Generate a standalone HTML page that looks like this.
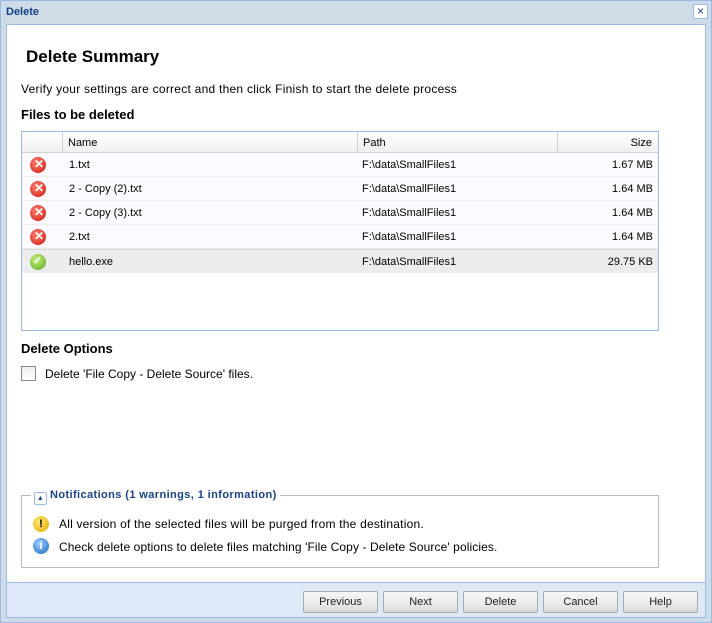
<!DOCTYPE html>
<html><head><style>
*{box-sizing:border-box;margin:0;padding:0}
body{width:712px;height:623px;background:#cad8e8;font-family:"Liberation Sans",sans-serif;font-size:12px;color:#000;position:relative;overflow:hidden}
.abs{position:absolute}
.title{left:0;top:0;width:712px;height:24px;background:#cfdbe6;border:1px solid #99bbe8;border-bottom:none}
.title span{position:absolute;left:5px;top:5px;font-weight:bold;color:#15428b;font-size:11px}
.close{right:4px;top:4px;width:15px;height:15px;border:1px solid #99bbe8;background:#fff;color:#15428b;font-size:12px;line-height:13px;text-align:center}
.frame{left:0;top:24px;width:712px;height:599px;background:#cfdbe6;border:1px solid #99bbe8;border-top:none}
.main{left:6px;top:24px;width:700px;height:559px;background:#fff;border:1px solid #99bbe8}
.foot{left:6px;top:583px;width:700px;height:35px;background:#dfe8f6;border:1px solid #99bbe8;border-top:none}
.grid{left:21px;top:131px;width:638px;height:200px;border:1px solid #99bbe8;background:#fff}
.hdr{position:absolute;left:0;top:0;width:636px;height:21px;background:linear-gradient(#fff,#f0f0f0);border-bottom:1px solid #d0d0d0}
.hc{position:absolute;top:0;height:21px;border-right:1px solid #d0d0d0;font-size:11px;padding:5px 5px;color:#000}
.row{position:absolute;left:0;width:636px;height:24px;border-bottom:1px solid #ededed;background:#fcfaff;font-size:11px}
.row div{position:absolute;top:6px}
.ic{position:absolute;left:8px;top:4px;width:16px;height:16px;border-radius:50%}
.btn{position:absolute;top:591px;width:75px;height:22px;border:1px solid #aaa;border-radius:2px;background:linear-gradient(#f7f7f7 0%,#eaeaea 60%,#d8d8d8 100%);font-size:11px;text-align:center;line-height:20px;color:#222}
</style></head><body>
<div class="abs frame"></div>
<div class="abs title"><span>Delete</span></div>
<div class="abs close">×</div>
<div class="abs main"></div>
<div class="abs foot"></div>
<div class="abs" style="left:26px;top:47px;font-size:17px;font-weight:bold">Delete Summary</div>
<div class="abs" style="left:21px;top:82px;letter-spacing:0.25px">Verify your settings are correct and then click Finish to start the delete process</div>
<div class="abs" style="left:21px;top:107px;font-weight:bold;font-size:13px">Files to be deleted</div>
<div class="abs grid">
<div class="hdr">
<div class="hc" style="left:0;width:41px"></div>
<div class="hc" style="left:41px;width:295px">Name</div>
<div class="hc" style="left:336px;width:200px">Path</div>
<div class="hc" style="left:536px;width:100px;text-align:right;border-right:none;padding-right:6px">Size</div>
</div>
<div class="row" style="top:21px"><span class="ic" style="background:radial-gradient(circle at 40% 35%,#ff7a6a,#d01c10)"><b style="position:absolute;left:4px;top:0;color:#fff;font-size:12px">✕</b></span><div style="left:47px">1.txt</div><div style="left:340px">F:\data\SmallFiles1</div><div style="right:5px">1.67 MB</div></div>
<div class="row" style="top:45px"><span class="ic" style="background:radial-gradient(circle at 40% 35%,#ff7a6a,#d01c10)"><b style="position:absolute;left:4px;top:0;color:#fff;font-size:12px">✕</b></span><div style="left:47px">2 - Copy (2).txt</div><div style="left:340px">F:\data\SmallFiles1</div><div style="right:5px">1.64 MB</div></div>
<div class="row" style="top:69px"><span class="ic" style="background:radial-gradient(circle at 40% 35%,#ff7a6a,#d01c10)"><b style="position:absolute;left:4px;top:0;color:#fff;font-size:12px">✕</b></span><div style="left:47px">2 - Copy (3).txt</div><div style="left:340px">F:\data\SmallFiles1</div><div style="right:5px">1.64 MB</div></div>
<div class="row" style="top:93px"><span class="ic" style="background:radial-gradient(circle at 40% 35%,#ff7a6a,#d01c10)"><b style="position:absolute;left:4px;top:0;color:#fff;font-size:12px">✕</b></span><div style="left:47px">2.txt</div><div style="left:340px">F:\data\SmallFiles1</div><div style="right:5px">1.64 MB</div></div>
<div class="row" style="top:117px;background:#ececec;border-top:1px solid #d8d8d8"><span class="ic" style="background:radial-gradient(circle at 40% 35%,#c8f080,#5aa61a)"><b style="position:absolute;left:3px;top:0;color:#fff;font-size:11px">✓</b></span><div style="left:47px">hello.exe</div><div style="left:340px">F:\data\SmallFiles1</div><div style="right:5px">29.75 KB</div></div>
</div>
<div class="abs" style="left:21px;top:341px;font-weight:bold;font-size:13px">Delete Options</div>
<div class="abs" style="left:21px;top:366px;width:15px;height:15px;border:1px solid #888;background:linear-gradient(#eee,#fff)"></div>
<div class="abs" style="left:45px;top:367px">Delete 'File Copy - Delete Source' files.</div>
<div class="abs" style="left:21px;top:495px;width:638px;height:73px;border:1px solid #b5b8c8"></div>
<div class="abs" style="left:31px;top:487px;background:#fff;padding:0 3px;font-size:11px;font-weight:bold;color:#15428b;line-height:16px;letter-spacing:0.4px"><span style="display:inline-block;width:13px;height:13px;border:1px solid #99bbe8;border-radius:2px;font-size:7px;text-align:center;line-height:11px;vertical-align:-2px;margin-right:3px">▲</span>Notifications (1 warnings, 1 information)</div>
<div class="abs" style="left:33px;top:516px;width:16px;height:16px;border-radius:50%;background:radial-gradient(circle at 40% 35%,#ffe870,#e0a800);text-align:center;font-weight:bold;font-size:11px;line-height:16px">!</div>
<div class="abs" style="left:59px;top:517px;letter-spacing:0.2px">All version of the selected files will be purged from the destination.</div>
<div class="abs" style="left:33px;top:538px;width:16px;height:16px;border-radius:50%;background:radial-gradient(circle at 40% 35%,#9cd0ff,#1a62c0);text-align:center;color:#fff;font-weight:bold;font-size:11px;line-height:16px">i</div>
<div class="abs" style="left:59px;top:540px;letter-spacing:0.1px">Check delete options to delete files matching 'File Copy - Delete Source' policies.</div>
<div class="btn" style="left:303px">Previous</div>
<div class="btn" style="left:383px">Next</div>
<div class="btn" style="left:463px">Delete</div>
<div class="btn" style="left:543px">Cancel</div>
<div class="btn" style="left:623px">Help</div>
</body></html>
